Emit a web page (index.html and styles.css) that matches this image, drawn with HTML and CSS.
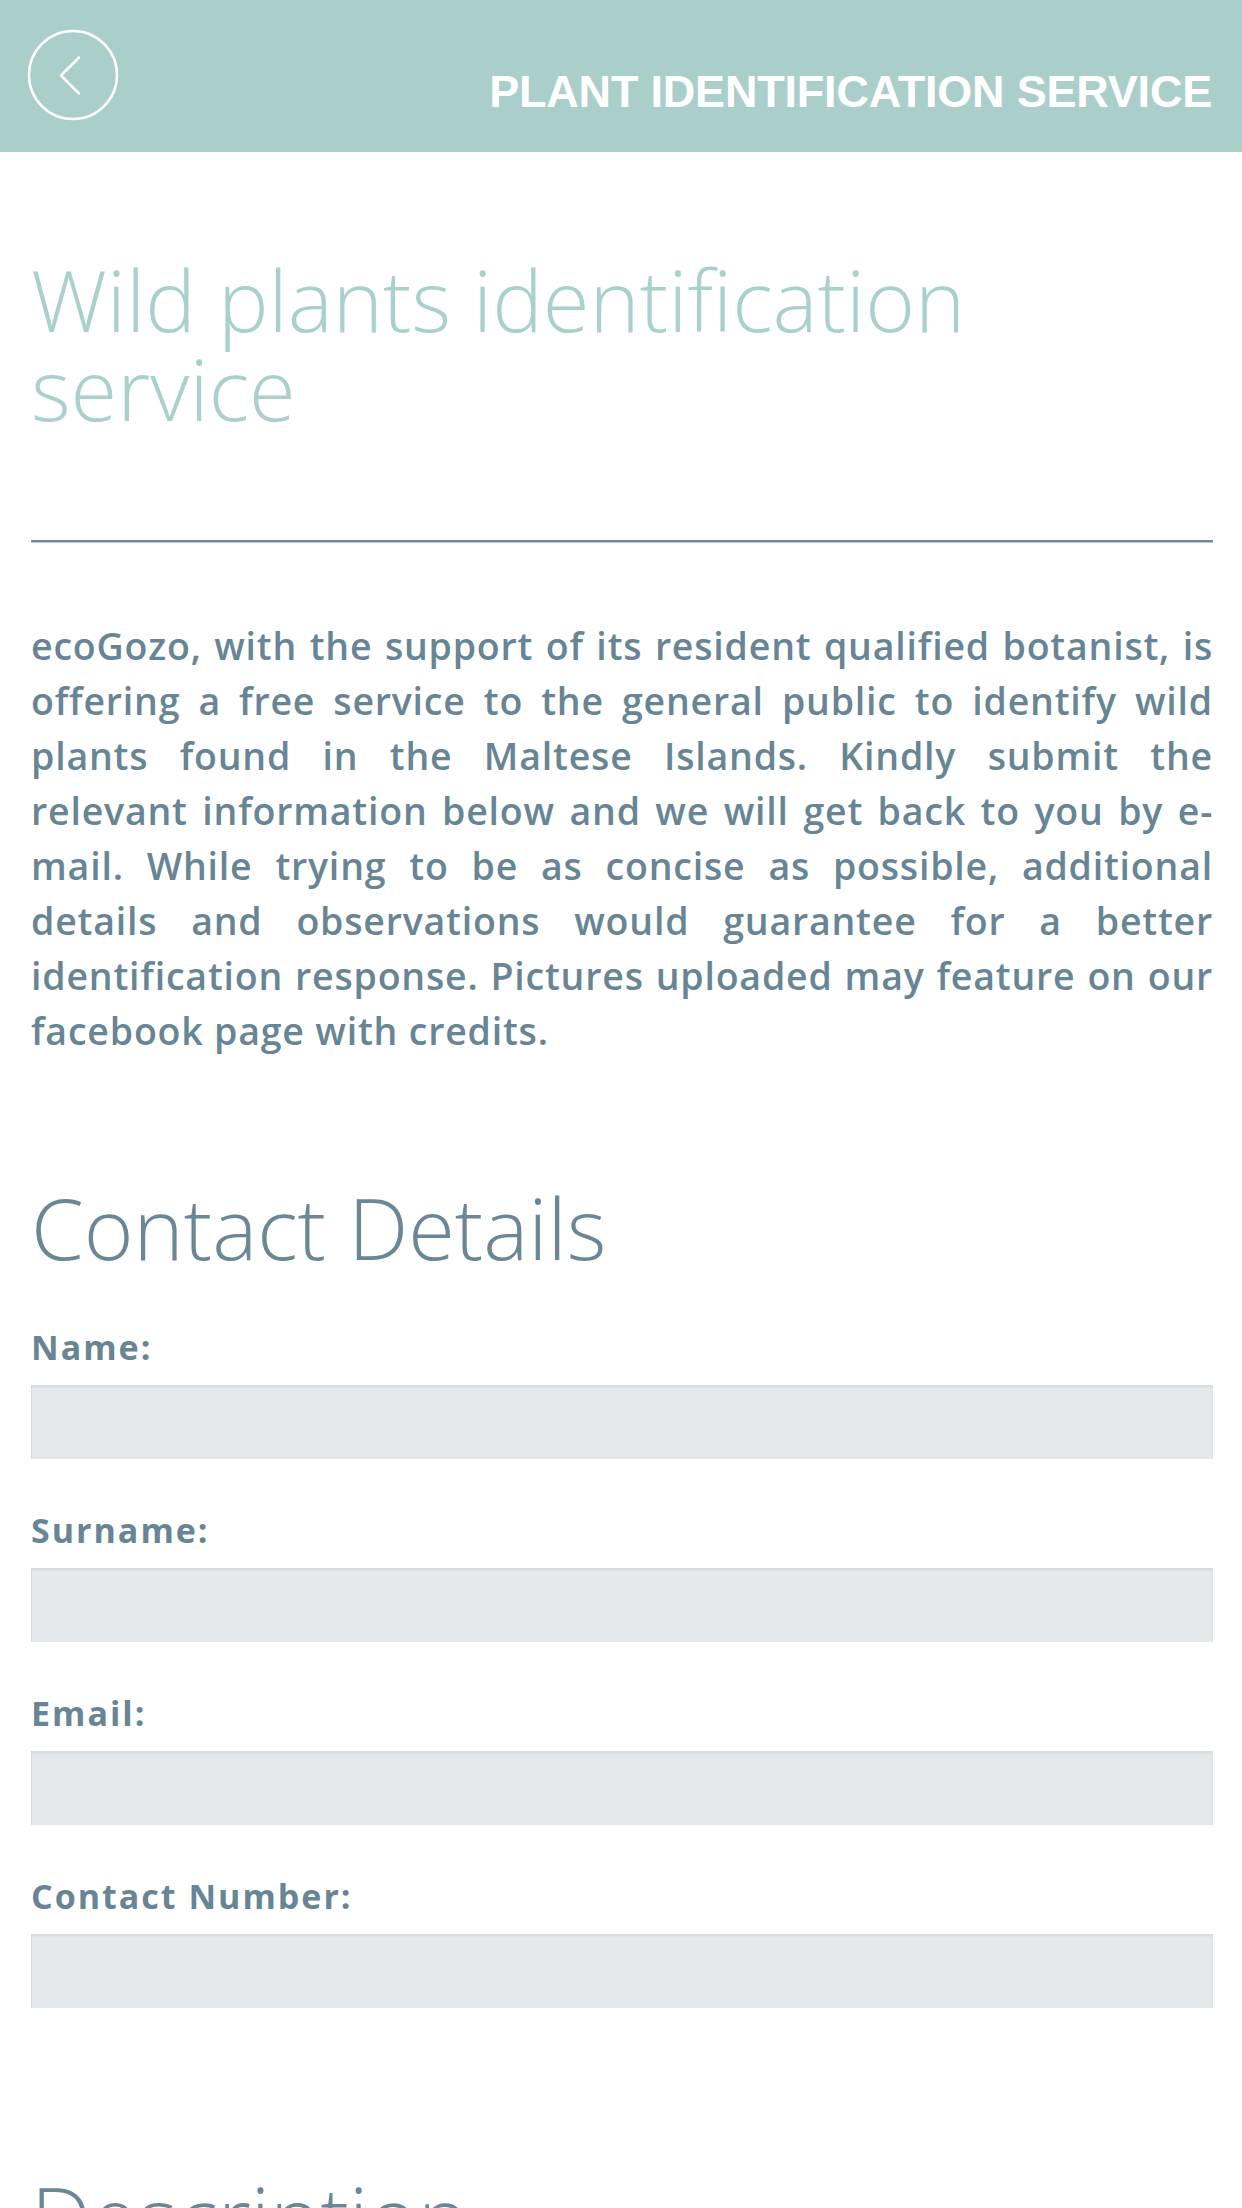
FILE: index.html
```html
<!DOCTYPE html>
<html lang="en">
<head>
<meta charset="utf-8">
<title>Plant Identification Service</title>
<link rel="stylesheet" href="styles.css">
</head>
<body>
<header class="topbar">
  <a class="back" href="#" aria-label="Back">
    <svg width="92" height="92" viewBox="0 0 92 92" aria-hidden="true">
      <circle cx="46" cy="46" r="44" fill="none" stroke="#ffffff" stroke-width="2.5"/>
      <polyline points="52,28.5 34,46.5 52,64.5" fill="none" stroke="#ffffff" stroke-width="2.5" stroke-linecap="round" stroke-linejoin="round"/>
    </svg>
  </a>
  <h1 class="topbar-title">PLANT IDENTIFICATION SERVICE</h1>
</header>
<main class="content">
  <h2 class="page-title">Wild plants identification service</h2>
  <hr class="divider">
  <p class="intro">
    <span class="intro-line">ecoGozo, with the support of its resident qualified botanist, is</span>
    <span class="intro-line">offering a free service to the general public to identify wild</span>
    <span class="intro-line">plants found in the Maltese Islands. Kindly submit the</span>
    <span class="intro-line">relevant information below and we will get back to you by e-</span>
    <span class="intro-line">mail. While trying to be as concise as possible, additional</span>
    <span class="intro-line">details and observations would guarantee for a better</span>
    <span class="intro-line">identification response. Pictures uploaded may feature on our</span>
    <span class="intro-line">facebook page with credits.</span>
  </p>
  <section class="form-section">
    <h3 class="section-title">Contact Details</h3>
    <div class="field">
      <label class="field-label" for="name">Name:</label>
      <input class="field-input" id="name" type="text">
    </div>
    <div class="field">
      <label class="field-label" for="surname">Surname:</label>
      <input class="field-input" id="surname" type="text">
    </div>
    <div class="field">
      <label class="field-label" for="email">Email:</label>
      <input class="field-input" id="email" type="email">
    </div>
    <div class="field">
      <label class="field-label" for="phone">Contact Number:</label>
      <input class="field-input" id="phone" type="tel">
    </div>
  </section>
  <section class="form-section form-section--next">
    <h3 class="section-title">Description</h3>
  </section>
</main>
</body>
</html>
```
FILE: styles.css
```css
* {
  box-sizing: border-box;
}

html, body {
  margin: 0;
  padding: 0;
  background: #ffffff;
}

body {
  font-family: "Open Sans", "Liberation Sans", sans-serif;
  color: #678594;
}

.topbar {
  height: 152px;
  background: #aacfcb;
  display: flex;
  justify-content: space-between;
  align-items: flex-start;
  padding: 29px 30px 0 27px;
}

.back {
  display: block;
  width: 92px;
  height: 92px;
}

.back svg {
  display: block;
}

.topbar-title {
  margin: 40px 0 0;
  font-family: "Liberation Sans", Arial, sans-serif;
  font-weight: 700;
  font-size: 45px;
  line-height: 45px;
  letter-spacing: -0.2px;
  color: #ffffff;
  white-space: nowrap;
}

.content {
  padding: 0 29px 0 31px;
}

.page-title {
  margin: 103px 0 0;
  font-family: "Open Sans", sans-serif;
  font-weight: 300;
  font-size: 85px;
  line-height: 89px;
  color: #a9d0cb;
}

.divider {
  margin: 107px 0 0;
  height: 3px;
  border: 0;
  border-top: 2px solid #6e8997;
  border-bottom: 1px solid #bccad1;
}

.intro {
  margin: 75px 0 0;
  font-weight: 600;
  font-size: 37.5px;
  line-height: 55px;
  letter-spacing: 0.8px;
  color: #678594;
}

.intro-line {
  display: block;
  white-space: nowrap;
  text-align: justify;
  text-align-last: justify;
}

.intro-line:last-child {
  text-align-last: left;
}

.form-section {
  margin-top: 124px;
}

.form-section--next {
  margin-top: 163px;
}

.section-title {
  margin: 0 0 55px;
  font-family: "Open Sans", sans-serif;
  font-weight: 300;
  font-size: 85px;
  line-height: 90px;
  color: #6a8796;
}

.field {
  display: flex;
  flex-direction: column;
  margin-bottom: 51px;
}

.field-label {
  font-weight: 700;
  font-size: 34px;
  line-height: 40px;
  letter-spacing: 2px;
  color: #678594;
  margin-bottom: 18px;
}

.field-input {
  display: block;
  width: 100%;
  height: 74px;
  margin: 0;
  border: 0;
  border-radius: 0;
  background: #e5e9ec;
  box-shadow: inset 0 2px 3px rgba(0, 0, 0, 0.07), inset 1px 0 1px rgba(0, 0, 0, 0.03);
  font: inherit;
  outline: none;
}
```
